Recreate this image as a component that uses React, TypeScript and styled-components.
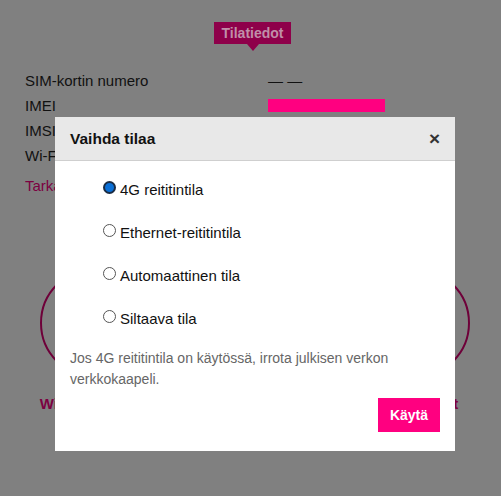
import * as React from 'react';
import styled, { createGlobalStyle } from 'styled-components';

const MAGENTA_DIM = '#7c0041';

const GlobalStyle = createGlobalStyle`
  html, body {
    margin: 0;
    padding: 0;
    background: #808080;
    font-family: "Liberation Sans", Arial, sans-serif;
    color: #111;
  }
  * { box-sizing: border-box; }
`;

const Page = styled.div`
  width: 501px;
  height: 496px;
  padding: 22px 25px 0;
  display: flex;
  flex-direction: column;
  overflow: hidden;
`;

const BadgeRow = styled.div`
  display: flex;
  justify-content: center;
  padding-left: 4px;
`;

const Badge = styled.div`
  position: relative;
  background: #8e004a;
  color: #c08fa8;
  font-weight: bold;
  font-size: 14px;
  height: 22px;
  line-height: 22px;
  padding: 0 8px;

  &::after {
    content: '';
    position: absolute;
    left: 50%;
    bottom: -7px;
    margin-left: -6px;
    border-left: 6px solid transparent;
    border-right: 6px solid transparent;
    border-top: 7px solid #8e004a;
  }
`;

const InfoGrid = styled.div`
  display: grid;
  grid-template-columns: 243px 1fr;
  margin-top: 24px;
  font-size: 15px;
  line-height: 25px;
`;

const Value = styled.span`
  display: flex;
  align-items: center;
`;

const Redacted = styled.span`
  position: relative;
  z-index: 2;
  width: 117px;
  height: 13px;
  background: #ff0080;
`;

const MoreLink = styled.a`
  margin-top: 5px;
  font-size: 15px;
  line-height: 25px;
  color: ${MAGENTA_DIM};
`;

const Tiles = styled.div`
  display: flex;
  gap: 50px;
  margin-top: 70px;
  padding-left: 15px;
`;

const Tile = styled.div`
  width: 110px;
  display: flex;
  flex-direction: column;
  align-items: center;
  gap: 17px;
`;

const Ring = styled.div`
  width: 110px;
  height: 110px;
  border-radius: 50%;
  border: 2px solid #6e0039;
`;

const TileLabel = styled.span`
  font-weight: bold;
  font-size: 15px;
  color: ${MAGENTA_DIM};
  white-space: nowrap;
`;

const Modal = styled.div`
  position: fixed;
  left: 55px;
  top: 117px;
  width: 400px;
  height: 334px;
  background: #fff;
  display: flex;
  flex-direction: column;
  z-index: 5;
`;

const ModalHeader = styled.div`
  height: 44px;
  background: #e8e8e8;
  border-bottom: 1px solid #cfcfcf;
  display: flex;
  align-items: center;
  justify-content: space-between;
  padding: 0 15px;
`;

const ModalTitle = styled.h2`
  margin: 0;
  font-size: 15.5px;
  font-weight: bold;
  color: #111;
`;

const CloseButton = styled.button`
  border: 0;
  background: none;
  padding: 0;
  font-family: inherit;
  font-weight: bold;
  font-size: 19px;
  line-height: 1;
  color: #333;
  cursor: pointer;
`;

const ModalBody = styled.div`
  flex: 1;
  padding: 0 15px 19px;
  display: flex;
  flex-direction: column;
`;

const Options = styled.div`
  display: flex;
  flex-direction: column;
  padding: 7px 0 0 33px;
`;

const OptionRow = styled.label`
  display: flex;
  align-items: center;
  gap: 4px;
  height: 43px;
  font-size: 15px;
  color: #111;
  cursor: pointer;
`;

const Radio = styled.input`
  appearance: none;
  margin: 0;
  width: 13px;
  height: 13px;
  border-radius: 50%;
  border: 1px solid #555;
  background: #fff;
  position: relative;
  top: -2px;

  &:checked {
    border-color: #1a2c44;
    background: #0a6fd6;
    border-width: 2px;
  }
`;

const Note = styled.p`
  margin: 8px 0 0;
  font-size: 14px;
  line-height: 21px;
  color: #666;
`;

const Actions = styled.div`
  display: flex;
  justify-content: flex-end;
  margin-top: auto;
`;

const ApplyButton = styled.button`
  width: 62px;
  height: 34px;
  border: 0;
  background: #ff0080;
  color: #fff;
  font-family: inherit;
  font-weight: bold;
  font-size: 14px;
  cursor: pointer;
`;

const modes = ['4G reititintila', 'Ethernet-reititintila', 'Automaattinen tila', 'Siltaava tila'];

export default function App() {
  const [mode, setMode] = React.useState(modes[0]);

  return (
    <>
      <GlobalStyle />
      <Page>
        <BadgeRow>
          <Badge>Tilatiedot</Badge>
        </BadgeRow>
        <InfoGrid>
          <span>SIM-kortin numero</span>
          <Value>— —</Value>
          <span>IMEI</span>
          <Value>
            <Redacted />
          </Value>
          <span>IMSI</span>
          <Value />
          <span>Wi-Fi-verkon nimi</span>
          <Value />
        </InfoGrid>
        <MoreLink>Tarkat tiedot</MoreLink>
        <Tiles>
          <Tile>
            <Ring />
            <TileLabel>Wi-Fi-asetukset</TileLabel>
          </Tile>
          <Tile>
            <Ring />
          </Tile>
          <Tile>
            <Ring />
            <TileLabel>Lisäpalvelut</TileLabel>
          </Tile>
        </Tiles>
      </Page>

      <Modal role="dialog">
        <ModalHeader>
          <ModalTitle>Vaihda tilaa</ModalTitle>
          <CloseButton aria-label="Sulje">×</CloseButton>
        </ModalHeader>
        <ModalBody>
          <Options>
            {modes.map((m) => (
              <OptionRow key={m}>
                <Radio
                  type="radio"
                  name="mode"
                  checked={mode === m}
                  onChange={() => setMode(m)}
                />
                {m}
              </OptionRow>
            ))}
          </Options>
          <Note>
            Jos 4G reititintila on käytössä, irrota julkisen verkon verkkokaapeli.
          </Note>
          <Actions>
            <ApplyButton>Käytä</ApplyButton>
          </Actions>
        </ModalBody>
      </Modal>
    </>
  );
}
